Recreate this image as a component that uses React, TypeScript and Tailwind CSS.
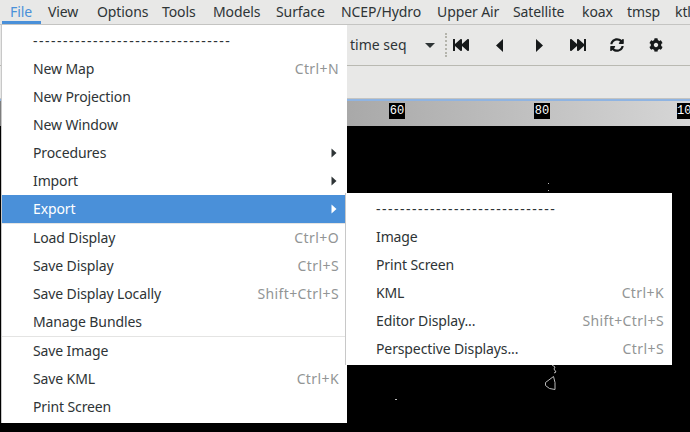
import { FaCog, FaFastBackward, FaFastForward, FaSyncAlt } from "react-icons/fa";

const topMenus = [
  { label: "File", width: "w-[38px]" },
  { label: "View", width: "w-[49px]" },
  { label: "Options", width: "w-[65px]" },
  { label: "Tools", width: "w-[51px]" },
  { label: "Models", width: "w-[63px]" },
  { label: "Surface", width: "w-[65px]" },
  { label: "NCEP/Hydro", width: "w-[96px]" },
  { label: "Upper Air", width: "w-[76px]" },
  { label: "Satellite", width: "w-[69px]" },
  { label: "koax", width: "w-[45px]" },
  { label: "tmsp", width: "w-[48px]" },
  { label: "ktlx", width: "w-[30px]" },
];

type Entry = { label: string; accel?: string; arrow?: boolean; active?: boolean; dashes?: boolean; inset?: string };

function Arrow({ light }: { light?: boolean }) {
  return (
    <svg width="6" height="10" viewBox="0 0 6 10" className={light ? "fill-white" : "fill-[#2e3436]"}>
      <path d="M0.5 0.5 L5.5 5 L0.5 9.5 Z" />
    </svg>
  );
}

function MenuRow({ label, accel, arrow, active, dashes, inset = "pl-[31px]" }: Entry) {
  return (
    <div
      className={`flex h-[28px] items-center justify-between pr-[8px] ${inset} ${
        active ? "bg-[#4a90d9] text-white" : "text-[#2e3436]"
      }`}
    >
      <span className={`whitespace-nowrap ${dashes ? "tracking-[1.5px]" : "tracking-[-0.12px]"}`}>{label}</span>
      {accel && <span className="whitespace-nowrap tracking-[0.4px] text-[#929595]">{accel}</span>}
      {arrow && (
        <span className="mr-[2px]">
          <Arrow light={active} />
        </span>
      )}
    </div>
  );
}

function Divider() {
  return <div className="h-px bg-[#e4e4e3]" />;
}

function RulerLabel({ text, left }: { text: string; left: string }) {
  return (
    <span
      className={`absolute top-[2px] flex h-[16px] min-w-[16px] items-center justify-center bg-black font-['Liberation_Mono',monospace] text-[12px] text-white ${left}`}
    >
      {text}
    </span>
  );
}

export default function App() {
  const sub = "pl-[30px]";

  return (
    <div className="relative h-[432px] w-[690px] overflow-hidden bg-black font-['Noto_Sans',sans-serif] text-[14px] leading-none">
      {/* menu bar */}
      <div className="relative flex h-[25px] items-center overflow-hidden border-b border-[#c4c4c2] bg-[#e8e8e7] pb-px pl-[10px] tracking-[-0.1px] text-[#2e3436]">
        {topMenus.map((m, i) => (
          <span key={m.label} className={`shrink-0 whitespace-nowrap ${m.width} ${i === 0 ? "text-[#4a90d9]" : ""}`}>
            {m.label}
          </span>
        ))}
        <div className="absolute bottom-0 left-[2px] h-[3px] w-[39px] bg-[#4a90d9]" />
      </div>

      {/* toolbar */}
      <div className="flex h-[41px] items-center border-b border-[#b9b9b2] bg-[#e8e8e7] pl-[350px] text-[#2e3436]">
        <span className="w-[75px] whitespace-nowrap">time seq</span>
        <svg width="10" height="5" viewBox="0 0 10 5" className="fill-[#2e3436]">
          <path d="M0 0 H10 L5 5 Z" />
        </svg>
        <div className="ml-[10px] h-[24px] border-l-2 border-dotted border-[#b4b4ac]" />
        <div className="flex items-center text-[#16191a]">
          <FaFastBackward size={16} className="ml-[6px]" />
          <svg width="7" height="13" viewBox="0 0 7 13" className="ml-[27px] fill-[#16191a]">
            <path d="M7 0 V13 L0 6.5 Z" />
          </svg>
          <svg width="7" height="13" viewBox="0 0 7 13" className="ml-[33px] fill-[#16191a]">
            <path d="M0 0 V13 L7 6.5 Z" />
          </svg>
          <FaFastForward size={16} className="ml-[27px]" />
          <FaSyncAlt size={14} className="ml-[24px]" />
          <FaCog size={14} className="ml-[25px]" />
        </div>
      </div>

      {/* second toolbar */}
      <div className="h-[33px] border-b border-[#c4c4c2] bg-[#e8e8e7]" />
      <div className="h-[2px] bg-[#8fb4e2]" />

      {/* ruler */}
      <div className="relative h-[25px] bg-gradient-to-r from-[#7d7d7d] to-[#d6d6d6]">
        <RulerLabel text="60" left="left-[389px]" />
        <RulerLabel text="80" left="left-[534px]" />
        <RulerLabel text="100" left="left-[677px]" />
      </div>

      {/* specks on the map */}
      <svg width="690" height="306" viewBox="0 126 690 306" className="absolute left-0 top-[126px]" fill="none">
        <path d="M548.5 183v1M548.5 190v1M395 399.5h2" stroke="#bbb" />
        <path d="M552 365l3 2-1 2 2 3-2 1" stroke="#bbb" />
        <path d="M553.5 376.5l-8 6v3l4 3 5.500 1v-7z" stroke="#bbb" />
      </svg>

      {/* File menu */}
      <div className="absolute left-[2px] top-[25px] w-[345px] bg-white pt-[2px] pb-[2px] shadow-[-1px_0_0_#c8c8c8]">
        <MenuRow label="---------------------------------" dashes />
        <MenuRow label="New Map" accel="Ctrl+N" />
        <MenuRow label="New Projection" />
        <MenuRow label="New Window" />
        <MenuRow label="Procedures" arrow />
        <MenuRow label="Import" arrow />
        <MenuRow label="Export" arrow active />
        <Divider />
        <MenuRow label="Load Display" accel="Ctrl+O" />
        <MenuRow label="Save Display" accel="Ctrl+S" />
        <MenuRow label="Save Display Locally" accel="Shift+Ctrl+S" />
        <MenuRow label="Manage Bundles" />
        <Divider />
        <MenuRow label="Save Image" />
        <MenuRow label="Save KML" accel="Ctrl+K" />
        <MenuRow label="Print Screen" />
      </div>

      {/* Export submenu */}
      <div className="absolute left-[345px] top-[193px] w-[327px] border-l border-[#c8c8c8] bg-white pt-[2px] pb-[2px]">
        <MenuRow label="------------------------------" dashes inset={sub} />
        <MenuRow label="Image" inset={sub} />
        <MenuRow label="Print Screen" inset={sub} />
        <MenuRow label="KML" accel="Ctrl+K" inset={sub} />
        <MenuRow label="Editor Display..." accel="Shift+Ctrl+S" inset={sub} />
        <MenuRow label="Perspective Displays..." accel="Ctrl+S" inset={sub} />
      </div>
    </div>
  );
}
